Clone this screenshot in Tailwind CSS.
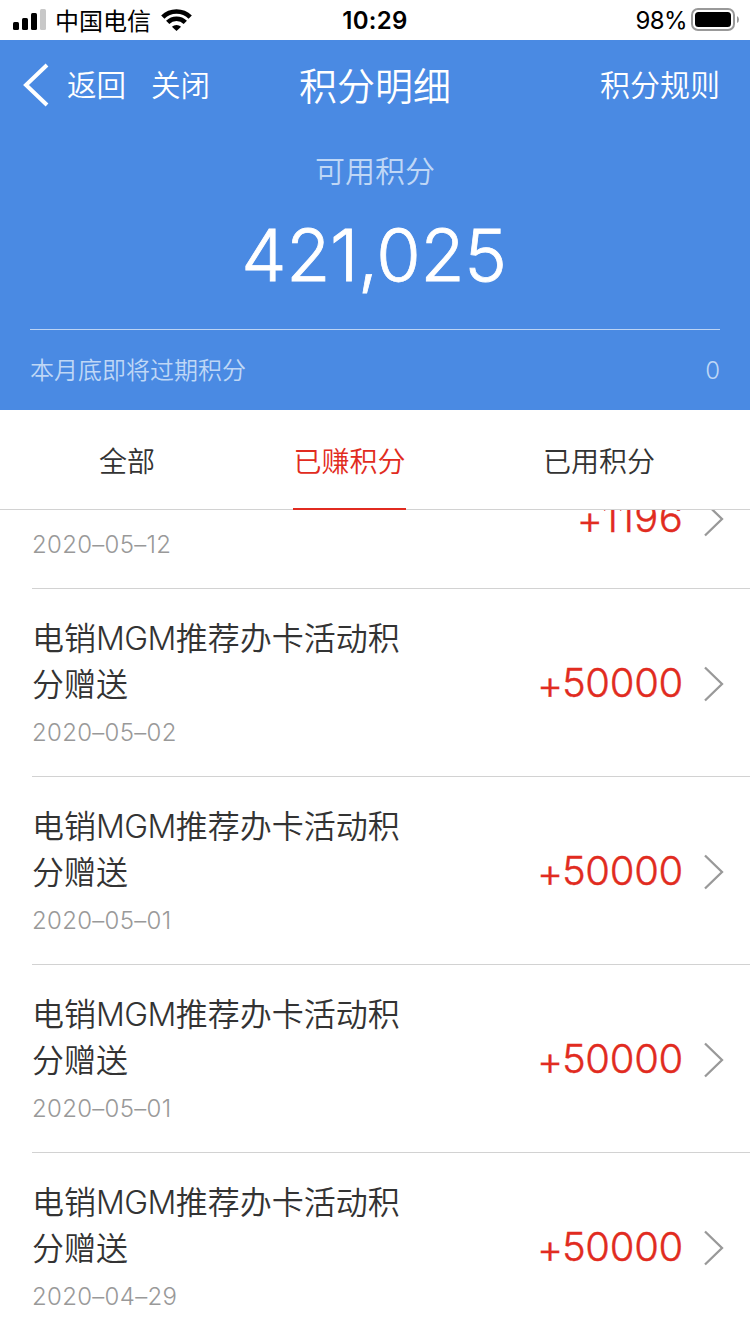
<!DOCTYPE html>
<html lang="zh-CN">
<head>
<meta charset="utf-8">
<title>积分明细</title>
<script src="https://cdn.jsdelivr.net/npm/@tailwindcss/browser@4"></script>
</head>
<body class="bg-white">
<div class="flex h-[1334px] w-[750px] flex-col overflow-hidden bg-white font-['Inter','Noto_Sans_CJK_SC',sans-serif] font-[350] text-[#333]">
  <!-- Status bar -->
  <div class="grid h-10 shrink-0 grid-cols-3 items-center text-black">
    <div class="flex h-10 items-center pl-[13px]">
      <svg class="h-10 w-[34px]" viewBox="0 0 34 40"><rect x="0" y="22" width="6" height="8" rx="1.5"/><rect x="9" y="18" width="6" height="12" rx="1.5"/><rect x="18" y="13" width="6" height="17" rx="1.5"/><rect x="27" y="9" width="6" height="21" rx="1.5" fill="#c8c8c8"/></svg>
      <span class="ml-2 pt-[3px] text-[24px] leading-[37px] font-normal whitespace-nowrap">中国电信</span>
      <svg class="ml-[10px] h-10 w-8" viewBox="0 0 32 40" fill="none" stroke="#000"><path d="M1.800 17.200a19.300 19.300 0 0 1 27.400 0" stroke-width="4.600"/><path d="M6.700 22.400a12.400 12.400 0 0 1 17.600 0" stroke-width="4.600"/><path d="M15.500 31l-4.600-4.200a6.700 6.700 0 0 1 9.200 0z" fill="#000" stroke="none"/></svg>
    </div>
    <div class="pt-[2px] text-center text-[24px] leading-[38px] font-semibold tracking-[0.3px]">10:29</div>
    <div class="flex h-10 items-center justify-end pr-[10px]">
      <span class="pt-[2px] text-[24px] leading-[38px] font-normal tracking-[-0.6px]">98%</span>
      <svg class="ml-1 h-10 w-[49px]" viewBox="0 0 49 40"><rect x="1" y="9" width="42" height="21" rx="6" fill="none" stroke="#999" stroke-width="2"/><rect x="4" y="12" width="36" height="15" rx="3.5"/><path d="M46 16q2 1 2 3.500t-2 3.500z" fill="#999"/></svg>
    </div>
  </div>

  <!-- Points summary -->
  <div class="h-[370px] shrink-0 bg-[#4a8ae3] px-[30px] text-white">
    <div class="grid h-[90px] grid-cols-[1fr_auto_1fr] items-center whitespace-nowrap">
      <div class="flex items-center text-[29.500px]">
        <svg class="-ml-2 h-[46px] w-[28px]" viewBox="0 0 28 46" fill="none" stroke="#fff" stroke-width="4"><path d="M25 3L4 23l21 20"/></svg>
        <span class="ml-[17px]">返回</span><span class="ml-[25px]">关闭</span>
      </div>
      <div class="pt-[3px] text-[38px]">积分明细</div>
      <div class="text-right text-[30px]">积分规则</div>
    </div>
    <div class="pt-px text-center text-[30px] leading-[80px] text-[#bfd7f6]">可用积分</div>
    <div class="-mt-px -ml-0.5 text-center text-[72px] leading-[90px] tracking-[-0.3px] [-webkit-text-stroke:0.8px_white]">421,025</div>
    <div class="mt-[29px] h-px bg-[#bcd4f5]"></div>
    <div class="flex h-20 items-center justify-between pt-px text-[24px] text-[#bfd7f6]"><span>本月底即将过期积分</span><span>0</span></div>
  </div>

  <!-- Tabs -->
  <div class="relative z-10 flex h-[100px] shrink-0 justify-between border-b border-[#d2d2d2] bg-white pr-[95px] pl-[98px] text-[28px] leading-[104px]">
    <div class="h-[100px] px-px">全部</div>
    <div class="h-[100px] border-b-2 border-[#e12b20] text-[#e12b20]">已赚积分</div>
    <div class="h-[100px]">已用积分</div>
  </div>

  <!-- Records -->
  <div class="flex min-h-0 flex-1 flex-col overflow-hidden">
    <div class="-mt-[63px] ml-8 flex h-[142px] shrink-0 items-center border-b border-[#d2d2d2]">
      <div class="h-full flex-1 pt-[73px] text-[24px] leading-[50px] tracking-[0.3px] text-[#999]">2020–05–12</div>
      <div class="flex pt-[3px] text-[40px] leading-[60px] tracking-[0.3px] text-[#e12b20] [-webkit-text-stroke:0.4px_#e12b20]"><span class="-mr-px pt-[2px]">+</span>1196</div>
      <svg class="mt-[3px] mr-[26px] ml-[21px] h-[36px] w-5" viewBox="0 0 20 36" fill="none" stroke="#999" stroke-width="2.300"><path d="M1 1.500L18 18 1 34.500"/></svg>
    </div>
    <div class="ml-8 flex h-[188px] shrink-0 items-center border-b border-[#d2d2d2]">
      <div class="h-full flex-1 pt-[27px]"><div class="w-[384px] text-[32px] leading-[46px]">电销<span class="tracking-[-0.6px]">MGM</span>推荐办卡活动积<br>分赠送</div><div class="text-[24px] leading-[50px] tracking-[0.3px] text-[#999]">2020–05–02</div></div>
      <div class="flex pt-[3px] text-[40px] leading-[60px] tracking-[-0.3px] text-[#e12b20] [-webkit-text-stroke:0.4px_#e12b20]"><span class="-mr-px pt-[2px]">+</span>50000</div>
      <svg class="mt-[3px] mr-[26px] ml-[21px] h-[36px] w-5" viewBox="0 0 20 36" fill="none" stroke="#999" stroke-width="2.300"><path d="M1 1.500L18 18 1 34.500"/></svg>
    </div>
    <div class="ml-8 flex h-[188px] shrink-0 items-center border-b border-[#d2d2d2]">
      <div class="h-full flex-1 pt-[27px]"><div class="w-[384px] text-[32px] leading-[46px]">电销<span class="tracking-[-0.6px]">MGM</span>推荐办卡活动积<br>分赠送</div><div class="text-[24px] leading-[50px] tracking-[0.3px] text-[#999]">2020–05–01</div></div>
      <div class="flex pt-[3px] text-[40px] leading-[60px] tracking-[-0.3px] text-[#e12b20] [-webkit-text-stroke:0.4px_#e12b20]"><span class="-mr-px pt-[2px]">+</span>50000</div>
      <svg class="mt-[3px] mr-[26px] ml-[21px] h-[36px] w-5" viewBox="0 0 20 36" fill="none" stroke="#999" stroke-width="2.300"><path d="M1 1.500L18 18 1 34.500"/></svg>
    </div>
    <div class="ml-8 flex h-[188px] shrink-0 items-center border-b border-[#d2d2d2]">
      <div class="h-full flex-1 pt-[27px]"><div class="w-[384px] text-[32px] leading-[46px]">电销<span class="tracking-[-0.6px]">MGM</span>推荐办卡活动积<br>分赠送</div><div class="text-[24px] leading-[50px] tracking-[0.3px] text-[#999]">2020–05–01</div></div>
      <div class="flex pt-[3px] text-[40px] leading-[60px] tracking-[-0.3px] text-[#e12b20] [-webkit-text-stroke:0.4px_#e12b20]"><span class="-mr-px pt-[2px]">+</span>50000</div>
      <svg class="mt-[3px] mr-[26px] ml-[21px] h-[36px] w-5" viewBox="0 0 20 36" fill="none" stroke="#999" stroke-width="2.300"><path d="M1 1.500L18 18 1 34.500"/></svg>
    </div>
    <div class="ml-8 flex h-[188px] shrink-0 items-center border-b border-[#d2d2d2]">
      <div class="h-full flex-1 pt-[27px]"><div class="w-[384px] text-[32px] leading-[46px]">电销<span class="tracking-[-0.6px]">MGM</span>推荐办卡活动积<br>分赠送</div><div class="text-[24px] leading-[50px] tracking-[0.3px] text-[#999]">2020–04–29</div></div>
      <div class="flex pt-[3px] text-[40px] leading-[60px] tracking-[-0.3px] text-[#e12b20] [-webkit-text-stroke:0.4px_#e12b20]"><span class="-mr-px pt-[2px]">+</span>50000</div>
      <svg class="mt-[3px] mr-[26px] ml-[21px] h-[36px] w-5" viewBox="0 0 20 36" fill="none" stroke="#999" stroke-width="2.300"><path d="M1 1.500L18 18 1 34.500"/></svg>
    </div>
  </div>
</div>
</body>
</html>
